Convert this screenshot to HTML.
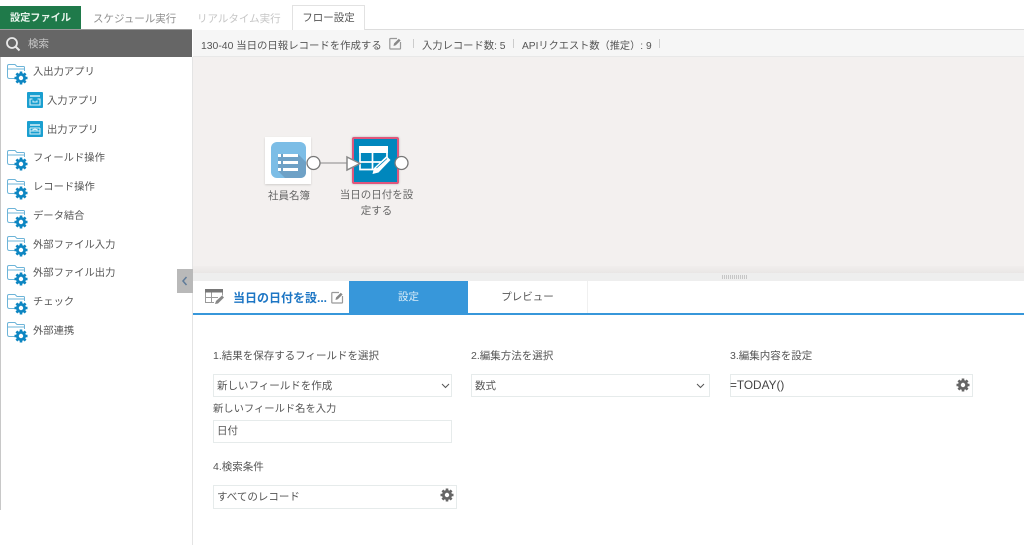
<!DOCTYPE html>
<html lang="ja"><head><meta charset="utf-8">
<style>
html,body{margin:0;padding:0;background:#fff}
body{width:1024px;height:545px;position:relative;overflow:hidden;font-family:"Liberation Sans","Noto Sans CJK JP",sans-serif;color:#555;font-size:10.5px}
.a{position:absolute;white-space:nowrap}
.s{font-size:10.3px}
.box{position:absolute;box-sizing:border-box;background:#fff;border:1px solid #e6ebeb;height:23px;line-height:21px;padding-left:3px;color:#555}
svg{position:absolute;overflow:visible}
</style></head><body>
<svg width="1" height="1" style="position:absolute;left:-10px;top:-10px"><defs>
<g id="gear"><circle cx="0" cy="0" r="3.6" fill="none" stroke="currentColor" stroke-width="2.8"/><g stroke="currentColor" stroke-width="2.6"><path d="M0-6.500V-4M0 4V6.500M-6.500 0H-4M4 0H6.500M-4.600-4.600L-2.800-2.800M2.800 2.800L4.600 4.600M-4.600 4.600L-2.800 2.800M2.800-2.800L4.600-4.600"/></g></g>
<g id="fold"><path d="M8 14.500H2.500Q.5 14.500.5 12.500V2Q.5.500 2 .500H8L10 2.500H16.500Q17.500 2.500 17.500 3.500V7M.5 5H17.500" fill="none" stroke="#6db4d8" stroke-width="1"/><use href="#gear" x="14" y="14" color="#0d86c2"/></g>
<g id="app1"><rect width="16" height="16" rx="1" fill="#1a9fd0"/><path d="M3 3H13V5H3Z" fill="#a8dcee"/><path d="M2.500 7H5.500M10.500 7H13.500M3 7V13H13V7M6 8.500V10H10V8.500" fill="none" stroke="#d8f0f8" stroke-width="1.100"/></g>
<g id="app2"><rect width="16" height="16" rx="1" fill="#1a9fd0"/><path d="M3 3H13V5H3Z" fill="#a8dcee"/><path d="M3 7H13M3 7V13H13V7M3 10H13M8 7V8.500M6 10V8.500H10V10" fill="none" stroke="#d8f0f8" stroke-width="1"/></g>
<g id="edit"><path d="M8 1.500H1.500Q.8 1.500.8 2.200V11.300Q.8 12 1.500 12H10.800Q11.500 12 11.500 11.300V5" fill="none" stroke="#999" stroke-width="1.200"/><path d="M4.500 9L5 6.500L9.800 1.700L11.600 3.500L6.800 8.300Z" fill="#888"/></g>
</defs></svg>

<!-- top tabs -->
<div class="a" style="left:0;top:6px;width:81px;height:23px;background:#1f7a4a;color:#e8f4ec;font-weight:bold;font-size:10.200px;line-height:25px;text-align:center">設定ファイル</div>
<div class="a" style="left:93px;top:11px;color:#8e8e8e;font-size:10.500px">スケジュール実行</div>
<div class="a" style="left:197px;top:11px;color:#c6c6c6;font-size:10.500px">リアルタイム実行</div>
<div class="a" style="left:292px;top:5px;width:73px;height:25px;box-sizing:border-box;border:1px solid #e2e2e2;border-bottom:none;background:#fff;text-align:center;line-height:25px;color:#555">フロー設定</div>

<!-- top gray line -->
<div class="a" style="left:365px;top:29px;width:659px;height:1px;background:#ddd"></div>

<!-- sidebar -->
<div class="a" style="left:0;top:29px;width:192px;height:28px;background:#666;border-top:1px solid #999;box-sizing:border-box"></div>
<svg style="left:5px;top:36px" width="16" height="16"><circle cx="7" cy="7" r="5" fill="none" stroke="#e8e8e8" stroke-width="1.800"/><path d="M10.500 10.500L14.500 14.500" stroke="#e8e8e8" stroke-width="2"/></svg>
<div class="a" style="left:28px;top:36px;color:#c8c8c8;font-size:10.500px">検索</div>
<div class="a" style="left:0;top:57px;width:1px;height:453px;background:#c8c8c8"></div>
<div class="a" style="left:192px;top:57px;width:1px;height:488px;background:#e4e4e4"></div>

<svg style="left:7px;top:64px" width="22" height="22"><use href="#fold"/></svg><div class="a s" style="left:33px;top:63px">入出力アプリ</div>
<svg style="left:27px;top:92px" width="16" height="16"><use href="#app1"/></svg><div class="a s" style="left:47px;top:92px">入力アプリ</div>
<svg style="left:27px;top:121px" width="16" height="16"><use href="#app2"/></svg><div class="a s" style="left:47px;top:121px">出力アプリ</div>
<svg style="left:7px;top:150px" width="22" height="22"><use href="#fold"/></svg><div class="a s" style="left:33px;top:149px">フィールド操作</div>
<svg style="left:7px;top:179px" width="22" height="22"><use href="#fold"/></svg><div class="a s" style="left:33px;top:178px">レコード操作</div>
<svg style="left:7px;top:208px" width="22" height="22"><use href="#fold"/></svg><div class="a s" style="left:33px;top:207px">データ結合</div>
<svg style="left:7px;top:236px" width="22" height="22"><use href="#fold"/></svg><div class="a s" style="left:33px;top:236px">外部ファイル入力</div>
<svg style="left:7px;top:265px" width="22" height="22"><use href="#fold"/></svg><div class="a s" style="left:33px;top:264px">外部ファイル出力</div>
<svg style="left:7px;top:294px" width="22" height="22"><use href="#fold"/></svg><div class="a s" style="left:33px;top:293px">チェック</div>
<svg style="left:7px;top:322px" width="22" height="22"><use href="#fold"/></svg><div class="a s" style="left:33px;top:322px">外部連携</div>

<!-- flow header -->
<div class="a" style="left:193px;top:30px;width:831px;height:27px;background:#f6f6f6;border-bottom:1px solid #e8e8e8;box-sizing:border-box"></div>
<div class="a" style="left:201px;top:37px;font-size:10.400px">130-40 当日の日報レコードを作成する</div>
<svg style="left:389px;top:37px" width="13" height="13"><use href="#edit"/></svg>
<div class="a" style="left:413px;top:39px;width:1px;height:9px;background:#ccc"></div>
<div class="a" style="left:422px;top:37px;font-size:10.300px">入力レコード数: 5</div>
<div class="a" style="left:513px;top:39px;width:1px;height:9px;background:#ccc"></div>
<div class="a" style="left:522px;top:37px;font-size:10.200px">APIリクエスト数（推定）: 9</div>
<div class="a" style="left:659px;top:39px;width:1px;height:9px;background:#ccc"></div>

<!-- canvas -->
<div class="a" style="left:193px;top:57px;width:831px;height:209px;background:#f3f0ef"></div>
<div class="a" style="left:193px;top:266px;width:831px;height:7px;background:linear-gradient(#f1eeed,#e9e6e5)"></div>
<div class="a" style="left:193px;top:273px;width:831px;height:8px;background:#eee"></div>
<div class="a" style="left:722px;top:275px;width:25px;height:4px;background:repeating-linear-gradient(90deg,#c6c6c6 0 1px,#eee 1px 2px)"></div>

<!-- node 1 -->
<div class="a" style="left:265px;top:137px;width:46px;height:47px;background:#fff;box-shadow:0 1px 2px rgba(0,0,0,.15)"></div>
<svg style="left:271px;top:142px" width="35" height="36">
<rect width="35" height="36" rx="6" fill="#7cbde6"/>
<path d="M7 29V12H27L35 20V30Q35 36 29 36H14Z" fill="#6ea1c6"/>
<path d="M7 12H10V15H7ZM12 12H27V15H12ZM7 19H10V22H7ZM12 19H27V22H12ZM7 26H10V29H7ZM12 26H27V29H12Z" fill="#fff"/>
</svg>
<div class="a" style="left:268px;top:188px;color:#666">社員名簿</div>

<!-- connector -->
<svg style="left:300px;top:150px" width="60" height="25">
<path d="M20 13H48" stroke="#888" stroke-width="1"/>
</svg>

<!-- node 2 -->
<div class="a" style="left:352px;top:137px;width:47px;height:47px;box-sizing:border-box;background:#0087bd;border:2px solid #e0567c;border-radius:2px;box-shadow:0 0 2px rgba(0,0,0,.25)"></div>
<svg style="left:352px;top:137px" width="47" height="47">
<path d="M7 9H36V16H7Z" fill="#fff"/>
<path d="M8 16V32.500H24M35 16V22M8 25H32M20.500 16V32.500" fill="none" stroke="#fff" stroke-width="1.700"/>
<path d="M20.500 37L22 31L34.500 19L38.500 23L26.500 35.500Z" fill="#fff"/>
<path d="M24.500 31L35 21.500" stroke="#0087bd" stroke-width=".8"/>
</svg>
<svg style="left:305px;top:152px" width="105" height="24">
<circle cx="8.500" cy="11" r="6.500" fill="#fff" stroke="#777" stroke-width="1.300"/>
<path d="M42 5L55 11.500L42 18Z" fill="#fff" stroke="#888" stroke-width="1.500"/>
<circle cx="96.500" cy="11" r="6.500" fill="#fff" stroke="#777" stroke-width="1.300"/>
</svg>
<div class="a" style="left:336px;top:188px;width:81px;text-align:center;color:#666;line-height:15.500px;white-space:normal">当日の日付を設定する</div>

<!-- collapse handle -->
<div class="a" style="left:177px;top:269px;width:16px;height:24px;background:#b9b9b9"></div>
<svg style="left:181px;top:276px" width="8" height="10"><path d="M5.500 1L2 5L5.500 9" fill="none" stroke="#5f7b99" stroke-width="1.500"/></svg>

<!-- bottom panel header -->
<svg style="left:205px;top:289px" width="20" height="15">
<path d="M0 0H18V3.500H0Z" fill="#777"/>
<path d="M.5 3.500V13.500H9M17.500 3.500V6.500M.5 8.500H13M6.500 3.500V13.500" fill="none" stroke="#999" stroke-width="1"/>
<path d="M10 15L11 12L17 6.500L19 8.500L13 14.500Z" fill="#888"/>
</svg>
<div class="a" style="left:233px;top:289px;font-weight:bold;color:#1d76c4;font-size:12px">当日の日付を設...</div>
<svg style="left:331px;top:291px" width="13" height="13"><use href="#edit"/></svg>
<div class="a" style="left:349px;top:281px;width:119px;height:32px;background:#3797da;color:#d8ecf8;text-align:center;line-height:32px">設定</div>
<div class="a" style="left:468px;top:281px;width:120px;height:32px;background:#fff;box-sizing:border-box;border-right:1px solid #f0f0f0;text-align:center;line-height:32px;color:#555">プレビュー</div>
<div class="a" style="left:193px;top:313px;width:831px;height:2px;background:#3797da"></div>

<!-- form -->
<div class="a" style="left:213px;top:348px">1.結果を保存するフィールドを選択</div>
<div class="box" style="left:213px;top:374px;width:239px;line-height:22px">新しいフィールドを作成</div>
<svg style="left:441px;top:383px" width="9" height="6"><path d="M1 1L4.500 4.500L8 1" fill="none" stroke="#555" stroke-width="1"/></svg>
<div class="a s" style="left:213px;top:400px">新しいフィールド名を入力</div>
<div class="box" style="left:213px;top:420px;width:239px">日付</div>
<div class="a" style="left:213px;top:459px">4.検索条件</div>
<div class="box" style="left:213px;top:485px;width:244px;height:24px;padding-left:3px;line-height:22px">すべてのレコード</div>
<svg style="left:440px;top:488px" width="14" height="14"><use href="#gear" x="7" y="7" color="#666"/></svg>

<div class="a" style="left:471px;top:348px">2.編集方法を選択</div>
<div class="box" style="left:471px;top:374px;width:239px;line-height:22px">数式</div>
<svg style="left:696px;top:383px" width="9" height="6"><path d="M1 1L4.500 4.500L8 1" fill="none" stroke="#555" stroke-width="1"/></svg>

<div class="a" style="left:730px;top:348px">3.編集内容を設定</div>
<div class="box" style="left:730px;top:374px;width:243px;color:#444;font-size:11.800px;line-height:21px;padding-left:0;text-indent:-1px">=TODAY()</div>
<svg style="left:956px;top:378px" width="14" height="14"><use href="#gear" x="7" y="7" color="#666"/></svg>
</body></html>
